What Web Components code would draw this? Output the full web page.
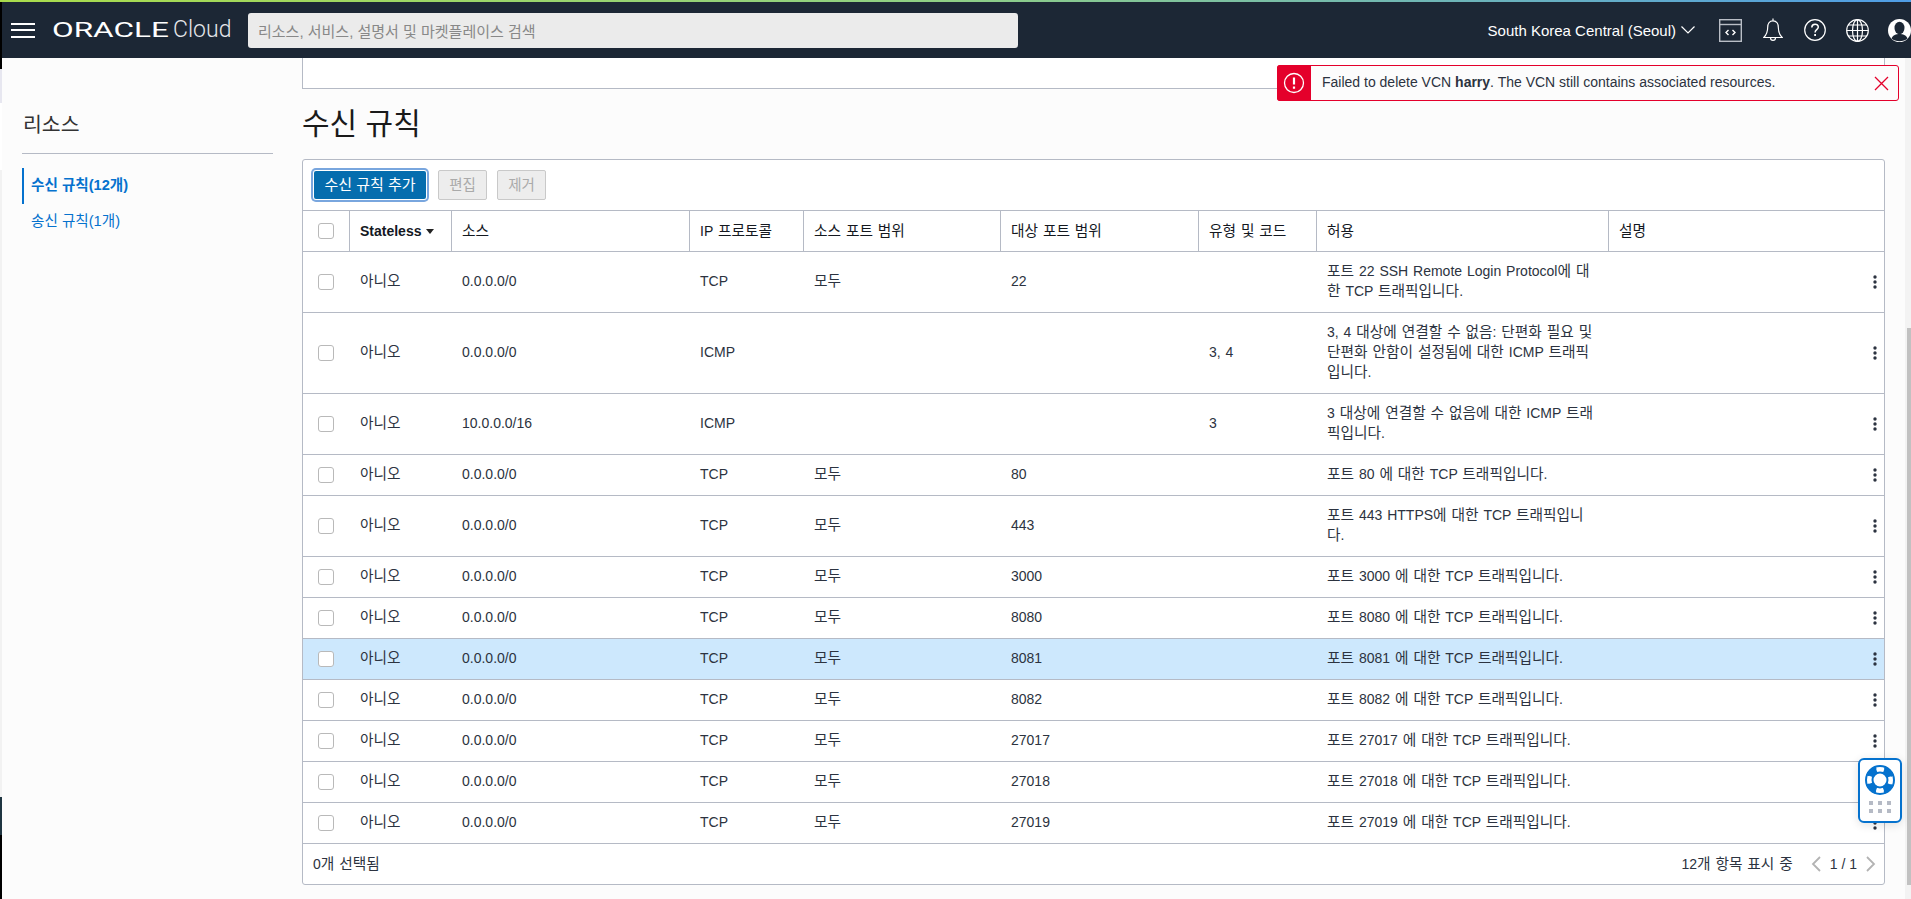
<!DOCTYPE html>
<html lang="ko">
<head>
<meta charset="utf-8">
<title>수신 규칙</title>
<style>
  html, body { margin: 0; height: 100%; overflow: hidden; }
  body {
    background: #fcfcfc;
    color: #2c3340;
    font: 14px/20px "Liberation Sans", "Noto Sans CJK KR", sans-serif;
  }
  .page { display: flex; height: 841px; }
  .page-main { flex: 1; min-width: 0; }
  h1 { margin: 16px 0; font-size: 30px; line-height: 38px; font-weight: 400; color: #1a1a1a; }
</style>
</head>
<body>
<oci-topbar></oci-topbar>
<div class="page">
  <oci-edge></oci-edge>
  <oci-sidebar></oci-sidebar>
  <div class="page-main">
    <oci-panel></oci-panel>
    <h1>수신 규칙</h1>
    <oci-rules-table></oci-rules-table>
  </div>
  <oci-scrollbar></oci-scrollbar>
</div>
<oci-toast>Failed to delete VCN <b>harry</b>. The VCN still contains associated resources.</oci-toast>
<oci-help></oci-help>

<script>
// hangul runs a bit bigger than the latin next to them, the original font is wider
const ko = (s) => s.replace(/[가-힣]+/g, '<span class="ko">$&</span>');

class OciTopbar extends HTMLElement {
  constructor() {
    super();
    this.attachShadow({ mode: "open" });
    this.shadowRoot.innerHTML = `
    <style>
      :host {
        display: flex;
        align-items: center;
        height: 56px;
        border-top: 2px solid;
        border-image: linear-gradient(90deg, #a9dc4c, #8fcf86 50%, #4f9de6) 1;
        background: #1c2735;
        box-shadow: inset 2px 0 0 #000;
        color: #fff;
      }
      .menu { margin-left: 11px; width: 24px; height: 15px; border-top: 2px solid #fff; border-bottom: 2px solid #fff; position: relative; box-sizing: border-box; }
      .menu::after { content: ""; position: absolute; left: 0; right: 0; top: 4.5px; height: 2px; background: #fff; }
      .logo { display: flex; align-items: center; margin-left: 17px; width: 196px; white-space: nowrap; }
      .oracle { font: 400 21px/24px Roboto, sans-serif; display: inline-block; transform: scaleX(1.5); transform-origin: left center; width: 121px; }
      .cloud { font: 300 23px/28px Roboto, sans-serif; color: #e4e6ea; }
      .search {
        width: 770px; height: 35px; box-sizing: border-box; padding-left: 10px;
        display: flex; align-items: center;
        background: #ebebeb; border-radius: 3px; color: #888;
        font: 15px "Liberation Sans", "Noto Sans CJK KR", sans-serif;
      }
      .right { margin-left: auto; display: flex; align-items: center; height: 100%; }
      .region { font: 15px "Liberation Sans", sans-serif; white-space: nowrap; }
      svg { display: block; flex: none; }
    </style>
    <div class="menu"></div>
    <div class="logo"><span class="oracle">ORACLE</span><span class="cloud">Cloud</span></div>
    <div class="search">리소스, 서비스, 설명서 및 마켓플레이스 검색</div>
    <div class="right">
      <span class="region">South Korea Central (Seoul)</span>
      <svg style="margin-left:5px" width="14" height="8" viewBox="0 0 14 8" fill="none" stroke="#fff" stroke-width="1.2"><path d="M.5.5 7 7 13.5.5"/></svg>
      <svg style="margin-left:24px" width="23" height="23" viewBox="0 0 23 23" fill="none" stroke="#b9bec6" stroke-width="1.4"><rect x=".7" y=".7" width="21.6" height="21.6"/><path d="M.7 5.5h21.6"/><path stroke="#fff" d="M9.5 11 7 13.500l2.500 2.500M13.500 11l2.500 2.500-2.500 2.500"/></svg>
      <svg style="margin-left:21px" width="20" height="24" viewBox="0 0 20 24" fill="none" stroke="#fff" stroke-width="1.2"><path d="M10 2.800c-3.800 0-5.300 3-5.300 6.500 0 5-1.200 7.500-3.900 10.200h18.400c-2.700-2.700-3.900-5.200-3.900-10.200 0-3.500-1.500-6.500-5.300-6.500z"/><path d="M10 .5v2.300M7.500 19.700c0 3.600 5 3.600 5 0"/></svg>
      <svg style="margin-left:21px" width="22" height="22" viewBox="0 0 22 22" fill="none" stroke="#fff" stroke-width="1.200"><circle cx="11" cy="11" r="10.300"/><path stroke-width="1.500" d="M7.800 8.400c0-4.300 6.500-4.300 6.500-.3 0 2.600-3.200 2.600-3.200 5.300"/><path stroke-width="1.800" d="M11.100 15v1.900"/></svg>
      <svg style="margin-left:20px" width="23" height="23" viewBox="0 0 23 23" fill="none" stroke="#fff" stroke-width="1.200"><circle cx="11.500" cy="11.500" r="10.800"/><ellipse cx="11.500" cy="11.500" rx="5" ry="10.800"/><path d="M11.500.7v21.600M.7 11.500h21.600M2.300 6h18.400M2.300 17h18.400"/></svg>
      <svg style="margin-left:19px" width="23" height="23" viewBox="0 0 23 23"><circle cx="11.500" cy="11.500" r="11.500" fill="#fff"/><ellipse cx="11.500" cy="9" rx="5" ry="6.200" fill="#1c2735"/><path fill="#1c2735" d="M3.500 19.500c1.500-3.500 4.500-4.500 8-4.500s6.500 1 8 4.500c-4 3.600-12 3.600-16 0z"/></svg>
    </div>
  `;
  }
}
customElements.define("oci-topbar", OciTopbar);

class OciEdge extends HTMLElement {
  constructor() {
    super();
    this.attachShadow({ mode: "open" });
    this.shadowRoot.innerHTML = `
    <style>
      :host {
        display: block;
        flex: none;
        width: 2px;
        background: linear-gradient(#000 0 11px, #e7e7f0 11px 45px, #fff 45px 112px, #f2f2f2 112px 739px, #1f3541 739px 777px, #000 777px);
      }
    </style>`;
  }
}
customElements.define("oci-edge", OciEdge);

class OciSidebar extends HTMLElement {
  constructor() {
    super();
    this.attachShadow({ mode: "open" });
    this.shadowRoot.innerHTML = `
    <style>
      :host { display: block; flex: none; width: 300px; box-sizing: border-box; padding: 53px 29px 0 20px; font-size: 14.6px; }
      h2 { margin: 0; height: 43px; padding-left: 1px; box-sizing: border-box; font-size: 20.5px; line-height: 28px; font-weight: 400; color: #333; border-bottom: 1px solid #b5bac5; }
      ul { margin: 14px 0 0; padding: 0; list-style: none; }
      li { height: 36px; line-height: 34px; padding-left: 7px; color: #0572ce; white-space: nowrap; }
      li.active { font-weight: 700; border-left: 2px solid #0572ce; }
      li + li { padding-left: 9px; }
    </style>
    <h2>리소스</h2>
    <ul>
      <li class="active">수신 규칙(12개)</li>
      <li>송신 규칙(1개)</li>
    </ul>`;
  }
}
customElements.define("oci-sidebar", OciSidebar);

class OciPanel extends HTMLElement {
  constructor() {
    super();
    this.attachShadow({ mode: "open" });
    this.shadowRoot.innerHTML = `
    <style>
      :host { display: block; height: 30px; margin-right: 20px; background: #fff; border: 1px solid #b5bac5; border-top: 0; }
    </style>`;
  }
}
customElements.define("oci-panel", OciPanel);

class OciButton extends HTMLElement {
  constructor() {
    super();
    this.attachShadow({ mode: "open" });
    this.shadowRoot.innerHTML = `
    <style>
      :host {
        display: inline-flex; align-items: center; justify-content: center;
        width: 49px; height: 30px; box-sizing: border-box;
        border: 1px solid #c9c9c9; border-radius: 2px;
        background: #ededed; color: #aaa; font-size: 14.5px; white-space: nowrap;
      }
      :host([primary]) {
        width: 112px; height: 28px; margin: 0 2px 0 1px; border: 0;
        background: #056dae; color: #fff; font-size: 15px;
        box-shadow: 0 0 0 1px #fff, 0 0 0 3px #79a6de;
      }
    </style>
    <slot></slot>`;
  }
}
customElements.define("oci-button", OciButton);

class OciCheckbox extends HTMLElement {
  constructor() {
    super();
    this.attachShadow({ mode: "open" });
    this.shadowRoot.innerHTML = `
    <style>
      :host { display: block; width: 16px; height: 16px; box-sizing: border-box; border: 1px solid #b9b9b9; border-radius: 3px; background: #fff; }
    </style>`;
  }
}
customElements.define("oci-checkbox", OciCheckbox);

// one row of the table, cell values come in as a json attribute
class OciRuleRow extends HTMLElement {
  constructor() {
    super();
    this.attachShadow({ mode: "open" });
  }

  connectedCallback() {
    const cells = JSON.parse(this.getAttribute("cells"));
    this.shadowRoot.innerHTML = `
    <style>
      :host {
        display: grid;
        grid-template-columns: var(--rule-cols);
        border-top: 1px solid #b5bac5;
        background: #fff;
        color: #2c3340;
        font-size: 14px;
        word-spacing: 1px;
      }
      :host([selected]) { background: #cde8fd; }
      div { padding: 10px 0 10px 10px; min-height: 20px; display: flex; align-items: center; transform: translateY(-1px); }
      .check { padding: 0 0 0 15px; transform: none; }
      .more { padding: 0; justify-content: flex-end; transform: none; }
      .ko { font-size: 14.7px; line-height: 0; }
      svg { margin-right: 7px; }
    </style>
    <div class="check"><oci-checkbox></oci-checkbox></div>
    ${cells.map((c) => `<div><span>${ko(c)}</span></div>`).join("")}
    <div class="more"><svg width="4" height="14" viewBox="0 0 4 14" fill="#2c3340"><circle cx="2" cy="2" r="1.700"/><circle cx="2" cy="7" r="1.700"/><circle cx="2" cy="12" r="1.700"/></svg></div>`;
  }
}
customElements.define("oci-rule-row", OciRuleRow);

const RULES = [
  ["0.0.0.0/0", "TCP", "모두", "22", "", "포트 22 SSH Remote Login Protocol에 대<br>한 TCP 트래픽입니다."],
  ["0.0.0.0/0", "ICMP", "", "", "3, 4", "3, 4 대상에 연결할 수 없음: 단편화 필요 및<br>단편화 안함이 설정됨에 대한 ICMP 트래픽<br>입니다."],
  ["10.0.0.0/16", "ICMP", "", "", "3", "3 대상에 연결할 수 없음에 대한 ICMP 트래<br>픽입니다."],
  ["0.0.0.0/0", "TCP", "모두", "80", "", "포트 80 에 대한 TCP 트래픽입니다."],
  ["0.0.0.0/0", "TCP", "모두", "443", "", "포트 443 HTTPS에 대한 TCP 트래픽입니<br>다."],
  ["0.0.0.0/0", "TCP", "모두", "3000", "", "포트 3000 에 대한 TCP 트래픽입니다."],
  ["0.0.0.0/0", "TCP", "모두", "8080", "", "포트 8080 에 대한 TCP 트래픽입니다."],
  ["0.0.0.0/0", "TCP", "모두", "8081", "", "포트 8081 에 대한 TCP 트래픽입니다."],
  ["0.0.0.0/0", "TCP", "모두", "8082", "", "포트 8082 에 대한 TCP 트래픽입니다."],
  ["0.0.0.0/0", "TCP", "모두", "27017", "", "포트 27017 에 대한 TCP 트래픽입니다."],
  ["0.0.0.0/0", "TCP", "모두", "27018", "", "포트 27018 에 대한 TCP 트래픽입니다."],
  ["0.0.0.0/0", "TCP", "모두", "27019", "", "포트 27019 에 대한 TCP 트래픽입니다."],
];

class OciRulesTable extends HTMLElement {
  constructor() {
    super();
    this.attachShadow({ mode: "open" });
  }

  connectedCallback() {
    const rows = RULES.map((r, i) => {
      const cells = JSON.stringify(["아니오", ...r]).replace(/"/g, "&quot;");
      return `<oci-rule-row cells="${cells}" ${i === 7 ? "selected" : ""}></oci-rule-row>`;
    }).join("");
    const heads = ["소스", "IP 프로토콜", "소스 포트 범위", "대상 포트 범위", "유형 및 코드", "허용", "설명"];
    this.shadowRoot.innerHTML = `
    <style>
      :host {
        display: block;
        margin-right: 20px;
        background: #fff;
        border: 1px solid #b5bac5;
        border-radius: 3px;
        --rule-cols: 47px 102px 238px 114px 197px 198px 118px 292px 1fr;
      }
      .toolbar { display: flex; align-items: center; gap: 10px; height: 50px; padding-left: 10px; }
      .head { display: grid; grid-template-columns: var(--rule-cols); height: 40px; border-top: 1px solid #b5bac5; font-size: 14px; word-spacing: 1px; color: #14181f; }
      .head > div { display: flex; align-items: center; padding-left: 10px; border-right: 1px solid #b5bac5; white-space: nowrap; }
      .head > div:first-child { padding-left: 15px; }
      .head > div:last-child { border-right: 0; }
      .head b { font-size: 14px; }
      .caret { width: 0; height: 0; margin: 1px 0 0 5px; border: 4.5px solid transparent; border-top: 5px solid #222; border-bottom: 0; }
      .foot { display: flex; align-items: center; height: 40px; padding: 0 8px 0 10px; border-top: 1px solid #b5bac5; font-size: 14px; word-spacing: 1px; }
      .foot .count { margin-left: auto; }
      .foot svg { display: block; }
      .ko { font-size: 14.7px; line-height: 0; }
    </style>
    <div class="toolbar">
      <oci-button primary>수신 규칙 추가</oci-button>
      <oci-button>편집</oci-button>
      <oci-button>제거</oci-button>
    </div>
    <div class="head">
      <div><oci-checkbox></oci-checkbox></div>
      <div><b>Stateless</b><span class="caret"></span></div>
      ${heads.map((h) => `<div><span>${ko(h)}</span></div>`).join("")}
    </div>
    ${rows}
    <div class="foot">
      <span>${ko("0개 선택됨")}</span>
      <span class="count">${ko("12개 항목 표시 중")}</span>
      <svg style="margin-left:18px" width="10" height="16" viewBox="0 0 10 16" fill="none" stroke="#b3b3b3" stroke-width="1.800"><path d="M9 1 2 8l7 7"/></svg>
      <span style="margin-left:9px;word-spacing:0">1 / 1</span>
      <svg style="margin-left:9px" width="10" height="16" viewBox="0 0 10 16" fill="none" stroke="#b3b3b3" stroke-width="1.800"><path d="m1 1 7 7-7 7"/></svg>
    </div>`;
  }
}
customElements.define("oci-rules-table", OciRulesTable);

class OciScrollbar extends HTMLElement {
  constructor() {
    super();
    this.attachShadow({ mode: "open" });
    this.shadowRoot.innerHTML = `
    <style>
      :host { display: block; flex: none; width: 6px; background: #f3f3f3; }
      div { margin: 270px 0 0 2px; height: 557px; background: #c1c1c1; }
    </style>
    <div></div>`;
  }
}
customElements.define("oci-scrollbar", OciScrollbar);

class OciToast extends HTMLElement {
  constructor() {
    super();
    this.attachShadow({ mode: "open" });
    this.shadowRoot.innerHTML = `
    <style>
      :host {
        position: absolute; left: 1277px; top: 65px; width: 622px; height: 36px; box-sizing: border-box;
        display: flex; align-items: center;
        background: #fcfcfc; border: 1px solid #e4002b; border-radius: 3px;
        color: #2c3340; font-size: 14px; white-space: nowrap;
      }
      .badge { align-self: stretch; flex: none; width: 34px; margin: -1px 0 -1px -1px; background: #e4002b; display: flex; align-items: center; justify-content: center; border-radius: 3px 0 0 3px; }
      .text { margin-left: 11px; flex: 1; transform: translateY(-1px); }
      svg { display: block; flex: none; }
      .close { margin-right: 9px; }
    </style>
    <div class="badge"><svg width="22" height="22" viewBox="0 0 22 22" fill="none" stroke="#fff"><circle cx="11" cy="11" r="9.500" stroke-width="1.300"/><path stroke-width="2.200" d="M11 5.500v7M11 14.500v2.200"/></svg></div>
    <div class="text"><slot></slot></div>
    <svg class="close" width="15" height="15" viewBox="0 0 15 15" fill="none" stroke="#e4002b" stroke-width="1.300"><path d="m1 1 13 13M14 1 1 14"/></svg>`;
  }
}
customElements.define("oci-toast", OciToast);

class OciHelp extends HTMLElement {
  constructor() {
    super();
    this.attachShadow({ mode: "open" });
    this.shadowRoot.innerHTML = `
    <style>
      :host {
        position: absolute; left: 1858px; top: 758px; width: 44px; height: 65px; box-sizing: border-box;
        display: flex; flex-direction: column; align-items: center;
        background: #fff; border: 2px solid #0572ce; border-radius: 6px;
        box-shadow: 0 2px 10px rgba(0,0,0,.12);
      }
      svg { display: block; margin-top: 5px; }
      .dots { display: grid; grid-template-columns: repeat(3, 4px); gap: 4px 5px; margin-top: 6px; }
      .dots i { height: 4px; background: #b5bac5; }
    </style>
    <svg width="30" height="30" viewBox="0 0 30 30" fill="none" stroke="#0572ce">
      <circle cx="15" cy="15" r="14" stroke-width="2"/>
      <circle cx="15" cy="15" r="7.500" stroke-width="2"/>
      <circle cx="15" cy="15" r="10.500" stroke-width="6" stroke-dasharray="9 7.490" stroke-dashoffset="4.500" transform="rotate(45 15 15)"/>
      <circle cx="15" cy="15" r="13" stroke-width="3" stroke-dasharray="12 8.420" stroke-dashoffset="6" transform="rotate(45 15 15)"/>
    </svg>
    <div class="dots"><i></i><i></i><i></i><i></i><i></i><i></i></div>`;
  }
}
customElements.define("oci-help", OciHelp);
</script>
</body>
</html>
